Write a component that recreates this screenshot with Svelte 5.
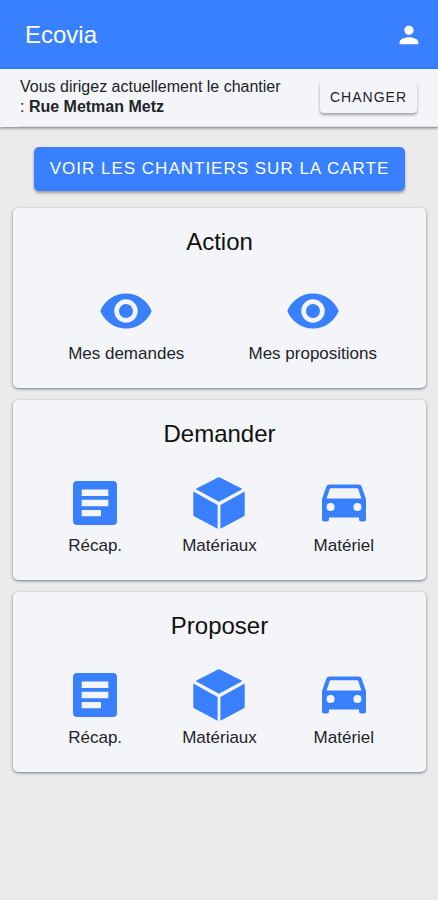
<script lang="ts">
  type Item = { icon: string; label: string };
  type Section = { title: string; items: Item[] };

  let site: string = "Rue Metman Metz";

  const stock: Item[] = [
    { icon: "recap", label: "Récap." },
    { icon: "cube", label: "Matériaux" },
    { icon: "car", label: "Matériel" },
  ];

  const sections: Section[] = [
    {
      title: "Action",
      items: [
        { icon: "eye", label: "Mes demandes" },
        { icon: "eye", label: "Mes propositions" },
      ],
    },
    { title: "Demander", items: stock },
    { title: "Proposer", items: stock },
  ];
</script>

<div class="page">
  <header class="toolbar">
    <h1 class="toolbar__title">Ecovia</h1>
    <button class="toolbar__profile" type="button" aria-label="Profil">
      <svg viewBox="0 0 24 24" width="28" height="28" fill="currentColor">
        <path d="M12 12c2.21 0 4-1.79 4-4s-1.79-4-4-4-4 1.79-4 4 1.79 4 4 4zm0 2c-2.67 0-8 1.34-8 4v2h16v-2c0-2.66-5.33-4-8-4z" />
      </svg>
    </button>
  </header>

  <div class="site">
    <div class="site__inner">
      <p class="site__text">Vous dirigez actuellement le chantier <span>: <b>{site}</b></span></p>
      <button class="site__button" type="button">CHANGER</button>
    </div>
  </div>

  <main class="content">
    <button class="map-button" type="button">VOIR LES CHANTIERS SUR LA CARTE</button>

    {#each sections as section}
      <section class="card">
        <h2 class="card__title">{section.title}</h2>
        <div class="card__items">
          {#each section.items as item}
            <a class="item" href="#{item.icon}">
              <svg class="item__icon" viewBox="0 0 56 56" fill="currentColor" aria-hidden="true">
                {#if item.icon === "eye"}
                  <path fill-rule="evenodd" d="M28 10.5C16.3 10.5 6.4 17.8 2.3 28c4.1 10.2 14 17.5 25.7 17.5S49.6 38.200 53.700 28C49.600 17.800 39.700 10.500 28 10.500zM28 39.700a11.700 11.700 0 1 1 0-23.400 11.700 11.700 0 0 1 0 23.400zM28 21a7 7 0 1 0 0 14 7 7 0 0 0 0-14z" />
                {:else if item.icon === "recap"}
                  <path fill-rule="evenodd" d="M10 6h36a4 4 0 0 1 4 4v36a4 4 0 0 1-4 4H10a4 4 0 0 1-4-4V10a4 4 0 0 1 4-4zM14.700 14.500v6.500h26.600v-6.500zM14.700 24.700v6.500h26.600v-6.500zM14.700 35v6.200H34V35z" />
                {:else if item.icon === "cube"}
                  <path d="M28 2.300a2 2 0 0 1 1 .3L51.500 14 28 26.800 4.500 14 27 2.600a2 2 0 0 1 1-.3zM2.300 16.500l24.300 13.500v23.800L3.500 41.500a2.400 2.400 0 0 1-1.200-2zM53.700 16.500l-24.300 13.500v23.800l23.100-12.300a2.400 2.400 0 0 0 1.200-2z" />
                {:else}
                  <path fill-rule="evenodd" d="M13.500 9.500h29a3.500 3.500 0 0 1 3.300 2.400L50 24v20.500a2 2 0 0 1-2 2h-3a2 2 0 0 1-2-2V42.500H13v2a2 2 0 0 1-2 2H8a2 2 0 0 1-2-2V24l4.200-12.100a3.500 3.500 0 0 1 3.300-2.400zM14 13.200L10.600 23.500h34.800L42 13.200zM14.600 28a4 4 0 1 0 0 8 4 4 0 0 0 0-8zM41.400 28a4 4 0 1 0 0 8 4 4 0 0 0 0-8z" />
                {/if}
              </svg>
              <span class="item__label">{item.label}</span>
            </a>
          {/each}
        </div>
      </section>
    {/each}
  </main>
</div>

<style>
  :global(body) {
    margin: 0;
    background-color: #ebebeb;
  }

  .page {
    font-family: "Liberation Sans", Arial, sans-serif;
    color: #222428;
    min-height: 100vh;
    background-color: #ebebeb;
  }

  button {
    border: 0;
    font-family: inherit;
    cursor: pointer;
  }

  .toolbar {
    display: flex;
    align-items: center;
    justify-content: space-between;
    padding: 21px 15px 20px 25px;
    background-color: #3880ff;
    color: #fff;
  }

  .toolbar__title {
    margin: 0;
    font-size: 24px;
    line-height: 28px;
    font-weight: 400;
  }

  .toolbar__profile {
    display: flex;
    padding: 0;
    background: none;
    color: inherit;
  }

  .site {
    padding-left: 20px;
    background-color: #f4f5f8;
    box-shadow: 0 1px 3px rgba(0, 0, 0, 0.5);
  }

  .site__inner {
    display: flex;
    align-items: center;
    justify-content: space-between;
    gap: 32px;
    padding: 8px 21px 9px 0;
    border-bottom: 1px solid #dcdde0;
  }

  .site__text {
    margin: 0;
    font-size: 16px;
    line-height: 20px;
  }

  .site__button {
    flex-shrink: 0;
    padding: 0 10px;
    font-size: 14px;
    line-height: 32px;
    letter-spacing: 1px;
    color: #222428;
    background-color: #f4f5f8;
    border-radius: 4px;
    box-shadow: 0 2px 3px rgba(0, 0, 0, 0.35);
  }

  .content {
    display: flex;
    flex-direction: column;
    gap: 12px;
    padding: 20px 12px 20px 13px;
  }

  .map-button {
    margin: 0 21px 5px;
    padding: 0;
    font-size: 17px;
    line-height: 44px;
    letter-spacing: 1px;
    white-space: nowrap;
    color: #fff;
    background-color: #3880ff;
    border-radius: 5px;
    box-shadow: 0 2px 3px rgba(0, 0, 0, 0.35);
  }

  .card {
    padding: 20px 20px 24px;
    background-color: #f4f5f8;
    border-radius: 5px;
    box-shadow: 0 1px 3px rgba(0, 0, 0, 0.5);
  }

  .card__title {
    margin: 0 0 27px;
    font-size: 24px;
    line-height: 28px;
    font-weight: 400;
    text-align: center;
    color: #111;
  }

  .card__items {
    display: grid;
    grid-auto-flow: column;
    grid-auto-columns: 1fr;
  }

  .item {
    display: flex;
    flex-direction: column;
    align-items: center;
    gap: 5px;
    color: #3880ff;
    text-decoration: none;
  }

  .item__icon {
    width: 56px;
    height: 56px;
  }

  .item__label {
    font-size: 17px;
    line-height: 20px;
    color: #222428;
  }
</style>
